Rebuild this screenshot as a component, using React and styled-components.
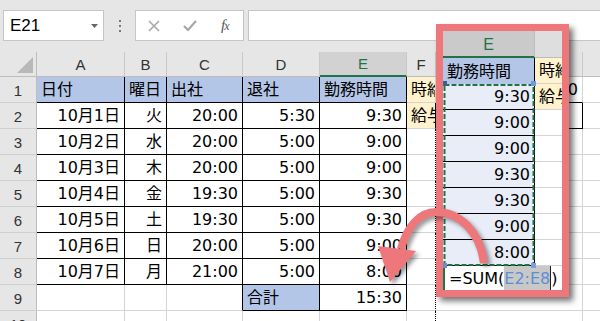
import React from 'react';
import styled, { createGlobalStyle } from 'styled-components';

const PINK = '#ee777c';
const GREEN = '#217346';
const GRID = '#d4d4d4';
const BLUE_FILL = '#b4c6e7';
const CREAM = '#fff2cc';
const SELECT = '#e8edf8';
const CELL_FONT = '"DejaVu Sans", "Noto Sans CJK JP", sans-serif';
const UI_FONT = '"Liberation Sans", Arial, sans-serif';

const GlobalStyle = createGlobalStyle`
  html, body {
    margin: 0;
    padding: 0;
    background: #fff;
  }
  body {
    width: 600px;
    height: 321px;
    overflow: hidden;
    font-family: ${CELL_FONT};
  }
`;

const Page = styled.div`
  position: relative;
  width: 600px;
  height: 321px;
  overflow: hidden;
  background: #fff;
`;

/* ---------- formula bar ---------- */

const Toolbar = styled.div`
  display: flex;
  align-items: stretch;
  height: 52px;
  box-sizing: border-box;
  padding: 10px 0 11px 3px;
  background: #e6e6e6;
`;

const NameBox = styled.div`
  display: flex;
  align-items: center;
  justify-content: space-between;
  width: 101px;
  box-sizing: border-box;
  padding: 0 5px 0 6px;
  background: #fff;
  border: 1px solid #c6c6c6;
  font-family: ${UI_FONT};
  font-size: 17px;
  color: #000;
`;

const Grip = styled.div`
  width: 31px;
  display: flex;
  flex-direction: column;
  align-items: center;
  justify-content: center;
  gap: 3px;
`;

const Dot = styled.span`
  width: 2px;
  height: 2px;
  background: #777;
`;

const FxBox = styled.div`
  display: flex;
  align-items: center;
  gap: 23px;
  width: 109px;
  box-sizing: border-box;
  padding-left: 12px;
  background: #fff;
  border: 1px solid #c6c6c6;
`;

const Fx = styled.span`
  margin-left: 1px;
  font-family: "Liberation Serif", serif;
  font-style: italic;
  font-size: 15px;
  color: #555;
  letter-spacing: -1px;

  small {
    font-size: 12px;
  }
`;

const FormulaInput = styled.div`
  flex: 1;
  margin-left: 4px;
  background: #fff;
  border: 1px solid #c6c6c6;
  border-right: none;
`;

/* ---------- sheet ---------- */

const COLS = ['A', 'B', 'C', 'D', 'E', 'F', 'G', 'H'];
const WIDTHS = [37, 88, 42, 76, 77, 87, 29, 147, 64];

const Sheet = styled.div`
  display: grid;
  grid-template-columns: ${WIDTHS.map((w) => `${w}px`).join(' ')};
  grid-template-rows: 25px repeat(10, 26px);
`;

const Corner = styled.div`
  position: relative;
  background: #e6e6e6;
  border-right: 1px solid #bdbdbd;
  border-bottom: 1px solid #bdbdbd;
  box-sizing: border-box;
`;

const ColHead = styled.div`
  display: flex;
  align-items: center;
  justify-content: center;
  box-sizing: border-box;
  background: ${(p) => (p.$active ? '#d2d2d2' : '#e6e6e6')};
  color: ${(p) => (p.$active ? GREEN : '#333')};
  border-right: 1px solid #c9c9c9;
  border-bottom: ${(p) => (p.$active ? `2px solid ${GREEN}` : '1px solid #bdbdbd')};
  font-family: ${UI_FONT};
  font-size: 15px;
`;

const RowHead = styled.div`
  display: flex;
  align-items: center;
  justify-content: center;
  box-sizing: border-box;
  background: #e6e6e6;
  color: #333;
  border-right: 1px solid #bdbdbd;
  border-bottom: 1px solid #cfcfcf;
  font-family: ${UI_FONT};
  font-size: 15px;
  padding-top: 1px;
`;

const Cell = styled.div`
  display: flex;
  align-items: center;
  justify-content: ${(p) => (p.$align === 'r' ? 'flex-end' : 'flex-start')};
  box-sizing: border-box;
  padding: 1px 4px 0 4px;
  background: ${(p) => p.$bg || '#fff'};
  border-right: ${(p) => p.$right};
  border-bottom: ${(p) => p.$bottom};
  font-size: 16px;
  line-height: 1;
  color: #000;
  white-space: nowrap;
  overflow: hidden;
`;

const L = (t, bg) => ({ t, a: 'l', bg });
const R = (t) => ({ t, a: 'r' });

const DATA = {
  1: [L('日付', BLUE_FILL), L('曜日', BLUE_FILL), L('出社', BLUE_FILL), L('退社', BLUE_FILL), L('勤務時間', BLUE_FILL), L('時給', CREAM), R('1000')],
  2: [R('10月1日'), R('火'), R('20:00'), R('5:30'), R('9:30'), L('給与', CREAM)],
  3: [R('10月2日'), R('水'), R('20:00'), R('5:00'), R('9:00')],
  4: [R('10月3日'), R('木'), R('20:00'), R('5:00'), R('9:00')],
  5: [R('10月4日'), R('金'), R('19:30'), R('5:00'), R('9:30')],
  6: [R('10月5日'), R('土'), R('19:30'), R('5:00'), R('9:30')],
  7: [R('10月6日'), R('日'), R('20:00'), R('5:00'), R('9:00')],
  8: [R('10月7日'), R('月'), R('21:00'), R('5:00'), R('8:00')],
  9: [null, null, null, L('合計', BLUE_FILL), R('15:30')],
};

const boxed = (r, c) =>
  (r >= 1 && r <= 8 && c <= 4) || (r === 9 && (c === 3 || c === 4)) || (r === 2 && c === 6);

const edge = (black) => `1px solid ${black ? '#000' : GRID}`;

/* ---------- zoomed panel ---------- */

const Panel = styled.div`
  position: absolute;
  left: 436px;
  top: 24px;
  width: 133px;
  height: 273px;
  box-sizing: border-box;
  border: 7px solid ${PINK};
  background: #fff;
  box-shadow: 4px 4px 6px rgba(0, 0, 0, 0.55);
  display: flex;
  flex-direction: column;
  overflow: hidden;
`;

const PanelRow = styled.div`
  display: flex;
  height: ${(p) => p.$h}px;
  flex-shrink: 0;
`;

const PanelHead = styled.div`
  display: flex;
  align-items: center;
  justify-content: center;
  box-sizing: border-box;
  width: ${(p) => (p.$active ? '92px' : 'auto')};
  flex: ${(p) => (p.$active ? 'none' : 1)};
  background: ${(p) => (p.$active ? '#cacaca' : '#dedede')};
  color: ${GREEN};
  border-bottom: ${(p) => (p.$active ? `2px solid ${GREEN}` : '1px solid #bdbdbd')};
  border-right: ${(p) => (p.$active ? '1px solid #bdbdbd' : 'none')};
  font-family: ${UI_FONT};
  font-size: 16px;
  padding-top: 2px;
`;

const PanelCell = styled(Cell)`
  width: ${(p) => (p.$wide ? '92px' : 'auto')};
  flex: ${(p) => (p.$wide ? 'none' : 1)};
  height: 26px;
  flex-shrink: 0;
`;

const Middle = styled.div`
  display: flex;
  flex-shrink: 0;
`;

const DashedBlock = styled.div`
  position: relative;
  width: 92px;
  display: flex;
  flex-direction: column;
`;

const Column = styled.div`
  flex: 1;
  display: flex;
  flex-direction: column;
`;

const Ants = styled.svg`
  position: absolute;
  left: 0;
  top: 0;
  pointer-events: none;
`;

const Handle = styled.span`
  position: absolute;
  width: 5px;
  height: 5px;
  background: ${(p) => p.$c};
  left: ${(p) => p.$x}px;
  top: ${(p) => p.$y}px;
`;

const FormulaRow = styled.div`
  flex: 1;
  display: flex;
  align-items: stretch;
  border-left: 2px solid ${GREEN};
  padding-left: 4px;
  background: #fff;
  font-size: 16px;
  white-space: nowrap;
`;

const FormulaText = styled.span`
  display: flex;
  align-items: center;
  padding-top: 1px;
`;

const RangeRef = styled.span`
  display: flex;
  align-items: center;
  padding-top: 1px;
  background: #c8c8c8;
  color: #5b8fd6;
  border-right: 1px solid #222;
`;

const ArrowLayer = styled.svg`
  position: absolute;
  left: 0;
  top: 0;
  pointer-events: none;
  filter: drop-shadow(3px 3px 2px rgba(0, 0, 0, 0.4));
`;

const PANEL_E = ['9:30', '9:00', '9:00', '9:30', '9:30', '9:00', '8:00'];

function FormulaBar() {
  return (
    <Toolbar>
      <NameBox>
        E21
        <svg width="7" height="4" viewBox="0 0 7 4">
          <polygon points="0,0 7,0 3.5,4" fill="#666" />
        </svg>
      </NameBox>
      <Grip>
        <Dot />
        <Dot />
        <Dot />
      </Grip>
      <FxBox>
        <svg width="12" height="12" viewBox="0 0 12 12">
          <path d="M1 1 L11 11 M11 1 L1 11" stroke="#a8a8a8" strokeWidth="1.6" />
        </svg>
        <svg width="14" height="11" viewBox="0 0 14 11">
          <polyline points="1,6 5,10 13,1" fill="none" stroke="#a8a8a8" strokeWidth="2.2" />
        </svg>
        <Fx>
          f<small>x</small>
        </Fx>
      </FxBox>
      <FormulaInput />
    </Toolbar>
  );
}

function Grid() {
  const rows = [];
  for (let r = 1; r <= 10; r += 1) {
    rows.push(<RowHead key={`h${r}`}>{r}</RowHead>);
    for (let c = 0; c < COLS.length; c += 1) {
      const d = (DATA[r] && DATA[r][c]) || null;
      let right = edge(boxed(r, c) || boxed(r, c + 1));
      if (c === 5 && r >= 3) right = '1px dotted #000';
      const bottom = edge(boxed(r, c) || boxed(r + 1, c));
      rows.push(
        <Cell key={`${r}-${c}`} $align={d ? d.a : 'l'} $bg={d && d.bg} $right={right} $bottom={bottom}>
          {d ? d.t : ''}
        </Cell>
      );
    }
  }

  return (
    <Sheet>
      <Corner>
        <svg width="37" height="25" style={{ position: 'absolute', left: 0, top: 0 }}>
          <polygon points="17,21 33,21 33,5" fill="#b8b8b8" />
        </svg>
      </Corner>
      {COLS.map((c) => (
        <ColHead key={c} $active={c === 'E'}>
          {c}
        </ColHead>
      ))}
      {rows}
    </Sheet>
  );
}

function ZoomPanel() {
  return (
    <Panel>
      <PanelRow $h={27}>
        <PanelHead $active>E</PanelHead>
        <PanelHead />
      </PanelRow>
      <PanelRow $h={26}>
        <PanelCell $wide $bg={BLUE_FILL} $right={edge(true)} $bottom="none">
          勤務時間
        </PanelCell>
        <PanelCell $bg={CREAM} $right="none" $bottom={edge(false)}>
          時給
        </PanelCell>
      </PanelRow>
      <Middle>
        <DashedBlock>
          {PANEL_E.map((v, i) => (
            <PanelCell key={i} $wide $align="r" $bg={SELECT} $right={edge(true)} $bottom={edge(true)}>
              {v}
            </PanelCell>
          ))}
          <Ants width="92" height="182">
            <rect x="1.5" y="1" width="89" height="180" fill="none" stroke={GREEN} strokeWidth="2" strokeDasharray="5 2" />
          </Ants>
          <Handle $c="#3d5f99" $x={-1} $y={-3} />
          <Handle $c="#6a9be0" $x={88} $y={-3} />
          <Handle $c="#6a8fd0" $x={-1} $y={179} />
          <Handle $c="#7aa0e0" $x={88} $y={179} />
        </DashedBlock>
        <Column>
          <PanelCell $bg={CREAM} $right="none" $bottom={edge(false)}>
            給与
          </PanelCell>
          {PANEL_E.slice(1).map((v, i) => (
            <PanelCell key={i} $right="none" $bottom={edge(false)} />
          ))}
        </Column>
      </Middle>
      <FormulaRow>
        <FormulaText>=SUM(</FormulaText>
        <RangeRef>E2:E8</RangeRef>
        <FormulaText>)</FormulaText>
      </FormulaRow>
    </Panel>
  );
}

function CurvedArrow() {
  return (
    <ArrowLayer width="600" height="321" viewBox="0 0 600 321">
      <path
        d="M484 263 C480 232, 460 212, 436 212 C420 212, 407 226, 401 249"
        fill="none"
        stroke={PINK}
        strokeWidth="8"
      />
      <polygon points="378,246 416,251 390,282" fill={PINK} />
    </ArrowLayer>
  );
}

export default function App() {
  return (
    <Page>
      <GlobalStyle />
      <FormulaBar />
      <Grid />
      <ZoomPanel />
      <CurvedArrow />
    </Page>
  );
}
